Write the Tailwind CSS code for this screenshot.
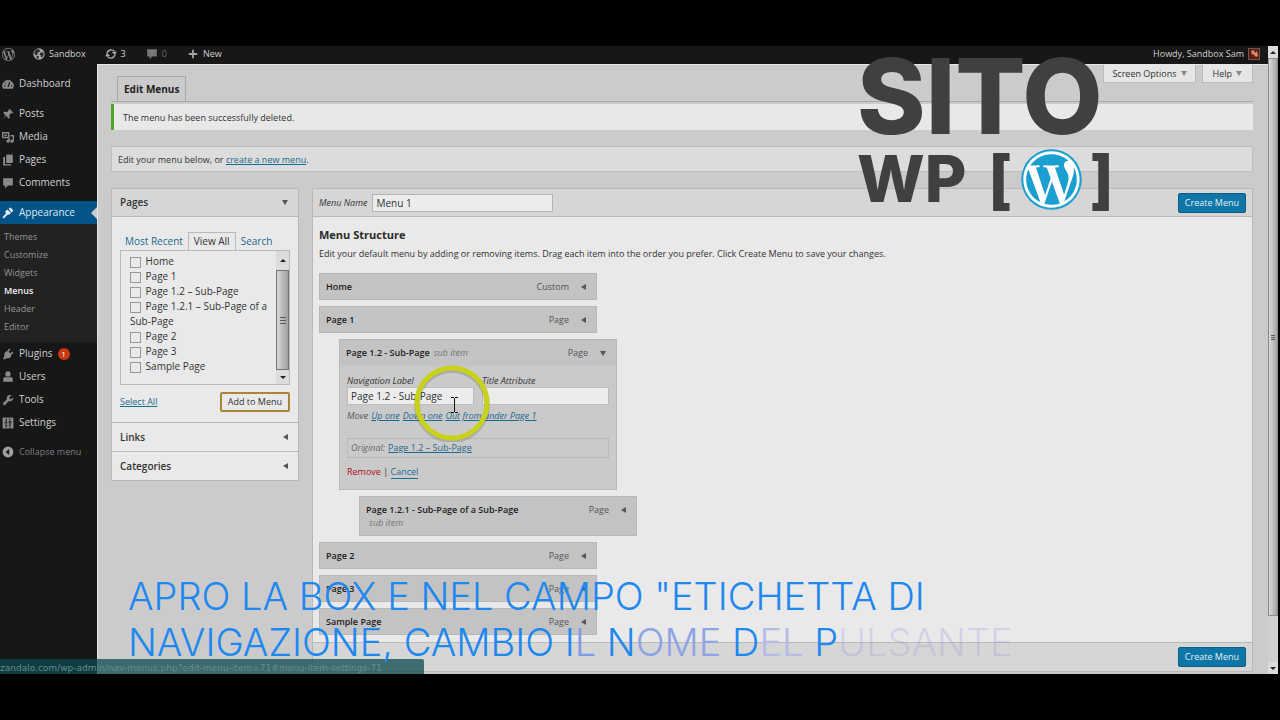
<!DOCTYPE html>
<html lang="en">

<head>
    <meta charset="UTF-8">
    <meta name="viewport" content="width=device-width, initial-scale=1.0">
    <title>Edit Menus</title>
    <script src="https://cdn.jsdelivr.net/npm/@tailwindcss/browser@4"></script>
</head>

<body class="bg-black min-h-screen py-[46px] pr-0.5 font-['Open_Sans',sans-serif] text-[9px] text-[#333]">
    <div class="relative flex flex-col bg-[#cbcbcb]">

        <!-- Admin bar -->
        <header class="h-[18px] pb-0.5 bg-[#171717] text-[#d0d0d0] flex items-center justify-between pr-[18px]">
            <nav class="flex items-center">
                <a href="#" aria-label="WordPress" class="ml-0.5 text-[#8a8a8a]">
                    <svg class="size-[13px]" viewBox="0 0 24 24" fill="currentColor"><path d="M21.469 6.825c.84 1.537 1.318 3.3 1.318 5.175 0 3.979-2.156 7.456-5.363 9.325l3.295-9.527c.615-1.54.82-2.771.82-3.864 0-.405-.026-.78-.07-1.11m-7.981.105c.647-.03 1.232-.105 1.232-.105.582-.075.514-.93-.067-.899 0 0-1.755.135-2.88.135-1.064 0-2.85-.15-2.85-.15-.585-.03-.661.855-.075.885 0 0 .54.061 1.125.09l1.68 4.605-2.37 7.08L5.354 6.9c.649-.03 1.234-.1 1.234-.1.585-.075.516-.93-.065-.896 0 0-1.746.138-2.874.138-.2 0-.438-.008-.69-.015C4.911 3.15 8.235 1.215 12 1.215c2.809 0 5.365 1.072 7.286 2.833-.046-.003-.091-.009-.141-.009-1.06 0-1.812.923-1.812 1.914 0 .89.513 1.643 1.06 2.531.411.72.89 1.643.89 2.977 0 .915-.354 1.994-.821 3.479l-1.075 3.585-3.9-11.61.001.014zM12 22.784c-1.059 0-2.081-.153-3.048-.437l3.237-9.406 3.315 9.087c.024.053.05.101.078.149-1.12.393-2.325.609-3.582.609M1.211 12c0-1.564.336-3.05.935-4.39L7.29 21.709C3.694 19.96 1.212 16.271 1.211 12M12 0C5.385 0 0 5.385 0 12s5.385 12 12 12 12-5.385 12-12S18.615 0 12 0"/></svg>
                </a>
                <a href="#" class="ml-4.5 flex items-center gap-1">
                    <svg class="size-3" viewBox="0 0 20 20"><circle cx="10" cy="10" r="9.500" fill="#a5a5a5"/><path d="M4 3l5-1 3 2-2 3-3 1 1 3-3 1-3-3zM12 8l5-1 1 4-3 5-2-1v-3l-2-1zM6 13l4 1-1 4-3-1z" fill="#2b2b2b"/></svg>
                    Sandbox
                </a>
                <a href="#" class="ml-[19px] flex items-center gap-1">
                    <svg class="size-3" viewBox="0 0 20 20" fill="none" stroke="#a5a5a5" stroke-width="2.4"><path d="M3.500 9A7 7 0 0 1 16 6M16.500 11A7 7 0 0 1 4 14"/><path d="M19.500 6l-2.500 5.500L11 7zM.5 14L3 8.500 9 13z" fill="#a5a5a5" stroke="none"/></svg>
                    3
                </a>
                <a href="#" class="ml-5 flex items-center gap-1 text-[#6a6a6a]">
                    <svg class="size-3" viewBox="0 0 20 20" fill="#777"><path d="M2 2h16v12h-8l-4 5v-5H2z"/></svg>
                    0
                </a>
                <a href="#" class="ml-5 flex items-center gap-1">
                    <svg class="size-3" viewBox="0 0 20 20" stroke="#a5a5a5" stroke-width="3"><path d="M10 3v14M3 10h14"/></svg>
                    New
                </a>
            </nav>
            <a href="#" class="flex items-center gap-1">
                Howdy, Sandbox Sam
                <svg class="size-3" viewBox="0 0 12 12"><rect width="12" height="12" fill="#6d5a50"/><rect x="1" y="1" width="10" height="10" fill="#5a1d10"/><path d="M3 3l3-1 1 3 2-2 1 5-2 1-3-3-1 1z" fill="#d98a6c"/></svg>
            </a>
        </header>

        <div class="flex">
            <!-- Side menu -->
            <nav class="w-[97px] shrink-0 bg-[#171717] text-[10px] text-[#d0d0d0] pt-2">
                <a href="#" class="h-[23px] flex items-center gap-[5px] pl-0.5">
                    <svg class="size-3" viewBox="0 0 20 20"><path d="M2 18a9.500 9.500 0 1 1 16 0z" fill="#8a8a8a"/><path d="M10 15l3-8M5 8l1 1M10 5v1M3.500 13h2M15 13h2" stroke="#171717" stroke-width="2"/></svg>
                    Dashboard
                </a>
                <a href="#" class="mt-[7px] h-[23px] flex items-center gap-[5px] pl-0.5">
                    <svg class="size-3" viewBox="0 0 20 20" fill="#8a8a8a"><path d="M12 1l7 7-2 1-1-1-4 4 1 4-2 2-4-5-6 6 5-7-4-4 2-2 4 1 4-4-1-1z"/></svg>
                    Posts
                </a>
                <a href="#" class="h-[23px] flex items-center gap-[5px] pl-0.5">
                    <svg class="size-3" viewBox="0 0 20 20" fill="none" stroke="#8a8a8a" stroke-width="2.500"><path d="M1 3h10v8H1zM4 7h4M14 8h5v9M12 12v5"/><circle cx="16.500" cy="17" r="1.500"/><circle cx="10" cy="17" r="1.500"/></svg>
                    Media
                </a>
                <a href="#" class="h-[23px] flex items-center gap-[5px] pl-0.5">
                    <svg class="size-3" viewBox="0 0 20 20" fill="#8a8a8a"><path d="M7 1h11v14H7z"/><path d="M2 5h3v12h10v2H2z"/></svg>
                    Pages
                </a>
                <a href="#" class="h-[23px] flex items-center gap-[5px] pl-0.5">
                    <svg class="size-3" viewBox="0 0 20 20" fill="#8a8a8a"><path d="M2 2h16v12h-8l-5 5v-5H2z"/></svg>
                    Comments
                </a>
                <a href="#" class="relative mt-[7px] h-[23px] flex items-center gap-[5px] pl-0.5 bg-[#04548a] text-[#dfe9f0]">
                    <svg class="size-3" viewBox="0 0 20 20" fill="#e8f0f5"><path d="M11 3l3-2 5 5-3 3zM9 4l6 6-3 3-2-1-7 7-2-2 6-7-2-2z"/></svg>
                    Appearance
                    <span class="absolute right-0 top-1.5 border-y-6 border-y-transparent border-r-6 border-r-[#cbcbcb]"></span>
                </a>
                <div class="bg-[#222] pt-1 pb-1.5 pl-1 text-[9px] leading-[18px] text-[#949494] flex flex-col">
                    <a href="#">Themes</a>
                    <a href="#">Customize</a>
                    <a href="#">Widgets</a>
                    <a href="#" class="font-semibold text-[#eee]">Menus</a>
                    <a href="#">Header</a>
                    <a href="#">Editor</a>
                </div>
                <a href="#" class="h-[23px] flex items-center gap-[5px] pl-0.5">
                    <svg class="size-3" viewBox="0 0 20 20" fill="#8a8a8a"><path d="M12 1l2 2-3 3 3 3 3-3 2 2-4 4c1 3-3 6-7 5l-5 2-1-1 2-5C3 9 6 5 8 6z"/></svg>
                    Plugins
                    <span class="size-3 rounded-full bg-[#c9380f] text-white text-[8px] leading-3 text-center">1</span>
                </a>
                <a href="#" class="h-[23px] flex items-center gap-[5px] pl-0.5">
                    <svg class="size-3" viewBox="0 0 20 20" fill="#8a8a8a"><circle cx="10" cy="5" r="4.500"/><path d="M2 18v-4c0-4 4-5 8-3 4-2 8-1 8 3v4z"/></svg>
                    Users
                </a>
                <a href="#" class="h-[23px] flex items-center gap-[5px] pl-0.5">
                    <svg class="size-3" viewBox="0 0 20 20" fill="#8a8a8a"><path d="M16 2l-4 4 2 3 5-3c0 5-4 7-8 6l-7 7-3-3 7-7C7 4 11 0 16 2z"/></svg>
                    Tools
                </a>
                <a href="#" class="h-[23px] flex items-center gap-[5px] pl-0.5">
                    <svg class="size-3" viewBox="0 0 20 20"><path d="M1 1h18v18H1z" fill="#8a8a8a"/><path d="M7 3v6M7 12v5M13 3v3M13 9v8M4 10h5M11 8h5" stroke="#171717" stroke-width="2"/></svg>
                    Settings
                </a>
                <button class="mt-1.5 h-[23px] flex items-center gap-[5px] pl-0.5 text-[9px] text-[#7d7d7d]">
                    <svg class="size-3" viewBox="0 0 20 20"><circle cx="10" cy="10" r="9" fill="#a0a0a0"/><path d="M12 5v10l-6-5z" fill="#171717"/></svg>
                    Collapse menu
                </button>
            </nav>

            <!-- Content -->
            <main class="flex-1 min-w-0 border-t border-l border-[#e6e6e6] pl-[13px] pr-[25px] pb-0.5">
                <div class="flex items-start justify-between border-b border-[#a8a8a8] h-[37px]">
                    <h2 class="ml-1.5 mt-[11px] h-[26px] px-1.5 border border-b-0 border-[#a8a8a8] text-[10px] leading-[25px] font-bold text-[#222]">Edit Menus</h2>
                    <div class="flex gap-1.5">
                        <button class="h-[18px] px-2 bg-[#e6e6e6] border border-t-0 border-[#bbb] flex items-center gap-1">Screen Options <span class="border-x-3 border-x-transparent border-t-5 border-t-[#888]"></span></button>
                        <button class="h-[18px] px-2.5 bg-[#e6e6e6] border border-t-0 border-[#bbb] flex items-center gap-1">Help <span class="border-x-3 border-x-transparent border-t-5 border-t-[#888]"></span></button>
                    </div>
                </div>
                <p class="mt-0.5 h-[26px] bg-[#e8e8e8] border-l-3 border-[#4fa62b] pl-[9px] leading-7">The menu has been successfully deleted.</p>
                <p class="mt-4 h-[26px] bg-[#dcdcdc] border border-[#bebebe] pl-1.5 leading-[26px]">Edit your menu below, or <a href="#" class="text-[#1b6a8f] underline">create a new menu</a>.</p>

                <div class="mt-4 flex items-start gap-[13px]">
                    <!-- Accordion -->
                    <section class="w-[188px] shrink-0 border border-[#b9b9b9] bg-[#e9e9e9]">
                        <h3 class="h-7 pl-2 pr-2.5 bg-[#d6d6d6] border-b border-[#b9b9b9] flex items-center justify-between text-[10px] font-semibold">Pages <span class="border-x-3 border-x-transparent border-t-5 border-t-[#555]"></span></h3>
                        <div class="px-2 pt-[15px] pb-2.5">
                            <div class="flex text-[10px] leading-[17px] text-[#1b6a8f] pl-[5px]">
                                <a href="#" class="pt-px pr-[5px]">Most Recent</a>
                                <a href="#" class="px-[5px] border border-b-0 border-[#b9b9b9] text-[#333]">View All</a>
                                <a href="#" class="pt-px pl-[5px]">Search</a>
                            </div>
                            <div class="flex h-[135px] border border-[#b9b9b9]">
                                <div class="flex-1 pl-[9px] pt-[3px] text-[10px] leading-[15px]">
                                    <label class="block"><input type="checkbox" class="appearance-none size-[11px] border border-[#999] align-middle mr-0.5"> Home</label>
                                    <label class="block"><input type="checkbox" class="appearance-none size-[11px] border border-[#999] align-middle mr-0.5"> Page 1</label>
                                    <label class="block"><input type="checkbox" class="appearance-none size-[11px] border border-[#999] align-middle mr-0.5"> Page 1.2 – Sub-Page</label>
                                    <label class="block"><input type="checkbox" class="appearance-none size-[11px] border border-[#999] align-middle mr-0.5"> Page 1.2.1 – Sub-Page of a Sub-Page</label>
                                    <label class="block"><input type="checkbox" class="appearance-none size-[11px] border border-[#999] align-middle mr-0.5"> Page 2</label>
                                    <label class="block"><input type="checkbox" class="appearance-none size-[11px] border border-[#999] align-middle mr-0.5"> Page 3</label>
                                    <label class="block"><input type="checkbox" class="appearance-none size-[11px] border border-[#999] align-middle mr-0.5"> Sample Page</label>
                                </div>
                                <div class="w-[13px] bg-[#c4c4c4] flex flex-col items-center">
                                    <span class="h-[19px] w-full bg-[#dcdcdc] flex items-center justify-center"><span class="border-x-3 border-x-transparent border-b-3 border-b-[#222]"></span></span>
                                    <span class="flex-1 w-full border border-[#777] bg-linear-to-r from-[#d8d8d8] to-[#a0a0a0] flex flex-col items-center justify-center gap-0.5"><span class="w-1.5 h-px bg-[#555]"></span><span class="w-1.5 h-px bg-[#555]"></span><span class="w-1.5 h-px bg-[#555]"></span></span>
                                    <span class="h-3.5 w-full bg-[#dcdcdc] flex items-center justify-center"><span class="border-x-3 border-x-transparent border-t-3 border-t-[#222]"></span></span>
                                </div>
                            </div>
                            <div class="mt-[7px] flex items-center justify-between">
                                <a href="#" class="text-[#1b6a8f] underline">Select All</a>
                                <button class="h-5 px-1.5 border-2 border-[#a98535] rounded-xs bg-[#e9e9e9] leading-4">Add to Menu</button>
                            </div>
                        </div>
                        <h3 class="h-[29px] pl-2 pr-2.5 border-t border-[#b9b9b9] flex items-center justify-between text-[10px] font-semibold">Links <span class="border-y-3 border-y-transparent border-r-5 border-r-[#555]"></span></h3>
                        <h3 class="h-[29px] pl-2 pr-2.5 border-t border-[#b9b9b9] flex items-center justify-between text-[10px] font-semibold">Categories <span class="border-y-3 border-y-transparent border-r-5 border-r-[#555]"></span></h3>
                    </section>

                    <!-- Menu editor -->
                    <section class="flex-1 min-w-0 border border-[#b9b9b9] bg-[#e9e9e9]">
                        <div class="h-7 px-1.5 bg-[#d6d6d6] border-b border-[#b9b9b9] flex items-center">
                            <label for="menuName" class="italic">Menu Name</label>
                            <input id="menuName" type="text" value="Menu 1" class="ml-[5px] w-[181px] h-[18px] px-[3px] bg-[#ececec] border border-[#b3b3b3] text-[10px]">
                            <button class="ml-auto h-5 px-1.5 rounded-xs border border-[#0b5f88] bg-[#0f76a8] text-[#e3eef4]">Create Menu</button>
                        </div>
                        <div class="px-1.5 pt-2.5 pb-[7px]">
                            <h3 class="text-[11px] leading-4 font-bold text-[#2b2b2b]">Menu Structure</h3>
                            <p class="mt-[3px] leading-4">Edit your default menu by adding or removing items. Drag each item into the order you prefer. Click Create Menu to save your changes.</p>

                            <ul class="mt-[11px] flex flex-col gap-1.5">
                                <li class="w-[278px] h-[27px] px-1.5 bg-[#c3c3c3] border border-[#b8b8b8] flex items-center">
                                    <span class="font-semibold text-[#1c1c1c]">Home</span><span class="ml-auto text-[#555]">Custom</span><span class="ml-3 mr-1 border-y-3 border-y-transparent border-r-5 border-r-[#555]"></span>
                                </li>
                                <li class="w-[278px] h-[27px] px-1.5 bg-[#c3c3c3] border border-[#b8b8b8] flex items-center">
                                    <span class="font-semibold text-[#1c1c1c]">Page 1</span><span class="ml-auto text-[#555]">Page</span><span class="ml-3 mr-1 border-y-3 border-y-transparent border-r-5 border-r-[#555]"></span>
                                </li>
                                <li class="ml-5 w-[278px] h-[151px] bg-[#cacaca] border border-[#b8b8b8]">
                                    <div class="h-[26px] px-1.5 bg-[#c3c3c3] flex items-center">
                                        <span class="font-semibold text-[#1c1c1c]">Page 1.2 - Sub-Page</span><span class="ml-1 italic text-[#777]">sub item</span><span class="ml-auto text-[#555]">Page</span><span class="ml-3 mr-1 border-x-3 border-x-transparent border-t-5 border-t-[#555]"></span>
                                    </div>
                                    <div class="px-[7px] pt-2">
                                        <div class="grid grid-cols-2 gap-2 italic">
                                            <label class="leading-[13px]">Navigation Label
                                                <input type="text" value="Page 1.2 - Sub-Page" class="block w-full h-[18px] px-[3px] bg-[#ececec] border border-[#bdbdbd] not-italic text-[10px]">
                                            </label>
                                            <label class="leading-[13px]">Title Attribute
                                                <input type="text" class="block w-full h-[18px] px-[3px] bg-[#ececec] border border-[#bdbdbd] not-italic text-[10px]">
                                            </label>
                                        </div>
                                        <p class="mt-[3px] leading-4 italic flex gap-[3px] text-[#1b6a8f]"><span class="text-[#555]">Move</span><a href="#" class="underline">Up one</a><a href="#" class="underline">Down one</a><a href="#" class="underline">Out from under Page 1</a></p>
                                        <p class="mt-3.5 h-5 px-[3px] border border-[#b9b9b9] leading-[18px] flex gap-[3px]"><span class="italic text-[#666]">Original:</span><a href="#" class="text-[#1b6a8f] underline">Page 1.2 – Sub-Page</a></p>
                                        <p class="mt-1.5 leading-4"><a href="#" class="text-[#a11]">Remove</a> | <a href="#" class="text-[#1b6a8f] border-b border-[#1b6a8f]">Cancel</a></p>
                                    </div>
                                </li>
                                <li class="ml-10 w-[278px] h-10 px-1.5 pt-1.5 bg-[#c3c3c3] border border-[#b8b8b8] flex items-start leading-[13px]">
                                    <div><p class="font-semibold text-[#1c1c1c]">Page 1.2.1 - Sub-Page of a Sub-Page</p><p class="pl-[3px] italic text-[#777]">sub item</p></div>
                                    <span class="ml-auto text-[#555]">Page</span><span class="ml-3 mt-1 mr-1 border-y-3 border-y-transparent border-r-5 border-r-[#555]"></span>
                                </li>
                                <li class="w-[278px] h-[27px] px-1.5 bg-[#c3c3c3] border border-[#b8b8b8] flex items-center">
                                    <span class="font-semibold text-[#1c1c1c]">Page 2</span><span class="ml-auto text-[#555]">Page</span><span class="ml-3 mr-1 border-y-3 border-y-transparent border-r-5 border-r-[#555]"></span>
                                </li>
                                <li class="w-[278px] h-[27px] px-1.5 bg-[#c3c3c3] border border-[#b8b8b8] flex items-center">
                                    <span class="font-semibold text-[#1c1c1c]">Page 3</span><span class="ml-auto text-[#555]">Page</span><span class="ml-3 mr-1 border-y-3 border-y-transparent border-r-5 border-r-[#555]"></span>
                                </li>
                                <li class="w-[278px] h-[27px] px-1.5 bg-[#c3c3c3] border border-[#b8b8b8] flex items-center">
                                    <span class="font-semibold text-[#1c1c1c]">Sample Page</span><span class="ml-auto text-[#555]">Page</span><span class="ml-3 mr-1 border-y-3 border-y-transparent border-r-5 border-r-[#555]"></span>
                                </li>
                            </ul>
                        </div>
                        <div class="h-[29px] px-1.5 bg-[#d6d6d6] border-t border-[#b9b9b9] flex items-center justify-end">
                            <button class="h-5 px-1.5 rounded-xs border border-[#0b5f88] bg-[#0f76a8] text-[#e3eef4]">Create Menu</button>
                        </div>
                    </section>
                </div>
            </main>
        </div>

        <!-- Window scrollbar -->
        <div class="absolute right-0 inset-y-0 w-2.5 bg-[#cfcfcf] flex flex-col">
            <span class="h-3 bg-[#dcdcdc] flex items-center justify-center"><span class="border-x-3 border-x-transparent border-b-3 border-b-[#222]"></span></span>
            <span class="h-[558px] border border-[#8a8a8a] bg-linear-to-r from-[#dadada] to-[#a4a4a4] flex flex-col items-center justify-center gap-px"><span class="w-1 h-px bg-[#555]"></span><span class="w-1 h-px bg-[#555]"></span><span class="w-1 h-px bg-[#555]"></span></span>
            <span class="mt-auto h-3 bg-[#dcdcdc] flex items-center justify-center"><span class="border-x-3 border-x-transparent border-t-3 border-t-[#222]"></span></span>
        </div>

        <!-- Link status bubble -->
        <div class="absolute left-0 bottom-0 w-[424px] h-[15px] rounded-tr-xs bg-[#0d4a4e]/75 font-['DejaVu_Sans',sans-serif] text-[9px] leading-[18px] text-[#638e90] whitespace-nowrap">zandalo.com/wp-admin/nav-menus.php?edit-menu-item=71#menu-item-settings-71</div>

        <!-- Pointer highlight -->
        <svg class="absolute left-[412px] top-[316px] w-20 h-20" viewBox="0 0 80 80" fill="none"><circle cx="40" cy="43" r="35" stroke="#000" stroke-opacity=".15" stroke-width="6"/><circle cx="40" cy="41" r="35" stroke="#c8d21a" stroke-width="5"/><path d="M39 35.500h3m1 0h3M42.500 36v14M39 50.500h3m1 0h3" stroke="#111"/></svg>

        <!-- Logo -->
        <div class="absolute left-[857px] top-0 w-[257px] font-['Inter',sans-serif] font-extrabold text-[#404040]">
            <p class="text-[104px] leading-[100px]">SITO</p>
            <div class="flex items-center justify-between text-[64px] leading-[66px]">
                <span>WP</span>
                <span class="flex items-center gap-2">
                    [
                    <svg class="size-[61px]" viewBox="-1 -1 26 26"><circle cx="12" cy="12" r="12.900" fill="#1b9fd0"/><path fill="#fff" d="M21.469 6.825c.84 1.537 1.318 3.3 1.318 5.175 0 3.979-2.156 7.456-5.363 9.325l3.295-9.527c.615-1.54.82-2.771.82-3.864 0-.405-.026-.78-.07-1.11m-7.981.105c.647-.03 1.232-.105 1.232-.105.582-.075.514-.93-.067-.899 0 0-1.755.135-2.88.135-1.064 0-2.85-.15-2.85-.15-.585-.03-.661.855-.075.885 0 0 .54.061 1.125.09l1.68 4.605-2.37 7.08L5.354 6.9c.649-.03 1.234-.1 1.234-.1.585-.075.516-.93-.065-.896 0 0-1.746.138-2.874.138-.2 0-.438-.008-.69-.015C4.911 3.15 8.235 1.215 12 1.215c2.809 0 5.365 1.072 7.286 2.833-.046-.003-.091-.009-.141-.009-1.06 0-1.812.923-1.812 1.914 0 .89.513 1.643 1.06 2.531.411.72.89 1.643.89 2.977 0 .915-.354 1.994-.821 3.479l-1.075 3.585-3.9-11.61.001.014zM12 22.784c-1.059 0-2.081-.153-3.048-.437l3.237-9.406 3.315 9.087c.024.053.05.101.078.149-1.12.393-2.325.609-3.582.609M1.211 12c0-1.564.336-3.05.935-4.39L7.29 21.709C3.694 19.96 1.212 16.271 1.211 12M12 0C5.385 0 0 5.385 0 12s5.385 12 12 12 12-5.385 12-12S18.615 0 12 0"/></svg>
                    ]
                </span>
            </div>
        </div>

        <!-- Caption -->
        <p class="absolute left-[128px] top-[527px] font-['Inter','Liberation_Sans',sans-serif] font-light text-[38px] leading-[46px] text-[#1e88f0] whitespace-nowrap">APRO LA BOX E NEL CAMPO "ETICHETTA DI<br>NAVIGAZIONE, CAMBIO I<span class="text-[#7d9be8]">L</span> N<span class="text-[#8fa4e4]">OME</span> D<span class="text-[#b4bce6]">EL</span> P<span class="text-[#9a9ae0]/30">ULSANTE</span></p>
    </div>
</body>

</html>
